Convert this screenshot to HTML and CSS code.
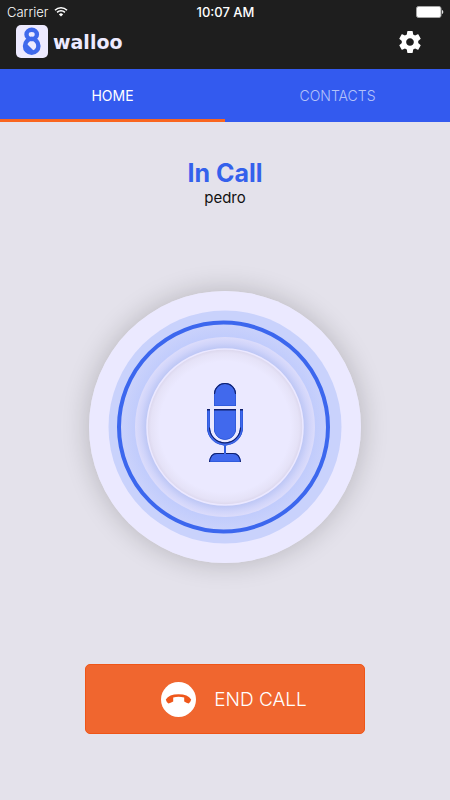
FILE: index.html
```html
<!DOCTYPE html>
<html lang="en">
<head>
<meta charset="utf-8">
<meta name="viewport" content="width=device-width, initial-scale=1">
<title>walloo</title>
<link rel="stylesheet" href="styles.css">
</head>
<body>
<header class="top">
  <div class="status">
    <div class="carrier">
      <span>Carrier</span>
      <svg class="wifi" viewBox="0 0 14 11" width="14" height="11" aria-hidden="true">
        <path d="M1 4.2a8.6 8.6 0 0 1 12 0M3.1 6.4a5.6 5.6 0 0 1 7.8 0" fill="none" stroke="#fff" stroke-width="1.6"/>
        <path d="M7 10.6 4.9 8.4a3 3 0 0 1 4.2 0z" fill="#fff"/>
      </svg>
    </div>
    <time class="clock">10:07 AM</time>
    <svg class="battery" viewBox="0 0 28 12" width="28" height="12" aria-hidden="true">
      <rect x=".5" y=".5" width="24.5" height="11" rx="2" fill="#fff" stroke="#a5a5a5"/>
      <path d="M26 4c1.7.4 1.7 3.6 0 4z" fill="#ddd"/>
    </svg>
  </div>
  <div class="bar">
    <div class="brand">
      <svg viewBox="0 0 32 33" width="32" height="33" aria-hidden="true">
        <rect width="32" height="33" rx="5" fill="#edeaff"/>
        <g fill="none" stroke="#3f69ec" stroke-width="4.4">
          <ellipse cx="15.700" cy="9.400" rx="5.200" ry="4.600"/>
          <ellipse cx="15.700" cy="20.900" rx="6.700" ry="7"/>
        </g>
        <path d="M11 26V19L18 26z" fill="#3f69ec"/>
      </svg>
      <span class="wordmark">walloo</span>
    </div>
    <button class="settings" type="button" aria-label="Settings">
      <svg viewBox="2 2 20 20" width="22" height="22" aria-hidden="true">
        <path fill="#fff" d="M19.43 12.98c.04-.32.07-.64.07-.98s-.03-.66-.07-.98l2.11-1.65c.19-.15.24-.42.12-.64l-2-3.46c-.12-.22-.39-.3-.61-.22l-2.49 1c-.52-.4-1.08-.73-1.69-.98l-.38-2.65C14.46 2.18 14.25 2 14 2h-4c-.25 0-.46.18-.49.42l-.38 2.65c-.61.25-1.17.59-1.69.98l-2.49-1c-.23-.09-.49 0-.61.22l-2 3.46c-.13.22-.07.49.12.64l2.11 1.65c-.04.32-.07.65-.07.98s.03.66.07.98l-2.11 1.65c-.19.15-.24.42-.12.64l2 3.46c.12.22.39.3.61.22l2.49-1c.52.4 1.08.73 1.69.98l.38 2.65c.03.24.24.42.49.42h4c.25 0 .46-.18.49-.42l.38-2.65c.61-.25 1.17-.59 1.69-.98l2.49 1c.23.09.49 0 .61-.22l2-3.46c.12-.22.07-.49-.12-.64l-2.11-1.65zM12 15.5c-1.93 0-3.5-1.57-3.5-3.5s1.57-3.5 3.5-3.5 3.5 1.57 3.5 3.5-1.57 3.5-3.5 3.5z"/>
      </svg>
    </button>
  </div>
</header>
<nav class="tabs">
  <a class="tab tab-active" href="#home" aria-current="page">HOME</a>
  <a class="tab" href="#contacts">CONTACTS</a>
</nav>
<main class="call">
  <h1 class="title">In Call</h1>
  <p class="name">pedro</p>
  <button class="dial" type="button" aria-label="Microphone">
    <svg viewBox="0 0 272 272" width="272" height="272" aria-hidden="true">
      <defs>
        <radialGradient id="band" gradientUnits="userSpaceOnUse" cx="136" cy="136" r="106">
          <stop offset=".85" stop-color="#c1ccfc"/>
          <stop offset="1" stop-color="#ccd3fb"/>
        </radialGradient>
        <radialGradient id="halo" gradientUnits="userSpaceOnUse" cx="136" cy="136" r="90">
          <stop offset=".87" stop-color="#bcc6f5"/>
          <stop offset=".94" stop-color="#d0d4fa"/>
          <stop offset="1" stop-color="#dcdcfb"/>
        </radialGradient>
        <radialGradient id="disc" gradientUnits="userSpaceOnUse" cx="136" cy="136" r="78">
          <stop offset=".84" stop-color="#ebe9ff"/>
          <stop offset=".95" stop-color="#e5e2f7"/>
          <stop offset="1" stop-color="#dbd6ec"/>
        </radialGradient>
        <path id="shape" d="M125 115v-12a11 11 0 0 1 22 0v12zM125 118h22v19.700a11 11 0 0 1-22 0zM118 118h3v18.500a15 15 0 0 0 30 0v-18.500h3v18.500a18 18 0 0 1-17 17.900v7.600h7q7 0 8 9h-32q1-9 8-9h7v-7.600a18 18 0 0 1-17-17.900z"/>
        <clipPath id="mic">
          <use href="#shape"/>
        </clipPath>
      </defs>
      <circle cx="136" cy="136" r="136" fill="#ebe9ff"/>
      <circle cx="136" cy="136" r="116.500" fill="#c9d2fc"/>
      <circle cx="134.500" cy="136" r="104.500" fill="url(#band)" stroke="#3c67ee" stroke-width="4"/>
      <circle cx="136" cy="136" r="90" fill="url(#halo)"/>
      <circle cx="136" cy="136" r="78" fill="url(#disc)" stroke="#ebe8ff" stroke-width="1.600"/>
      <use href="#shape" fill="#4169ed"/>
      <g clip-path="url(#mic)" fill="none">
        <use href="#shape" stroke="#2350cc" stroke-width="1"/>
        <path d="M125 103a11 11 0 0 1 22 0M125 118.500h22M118 118.500h3M151 118.500h3M121 136.500a15 15 0 0 0 30 0M120 171q1-9 8-9h7M137 162h7q7 0 8 9" stroke="#10206b" stroke-width="2"/>
      </g>
    </svg>
  </button>
  <button class="end" type="button">
    <svg viewBox="0 0 35 35" width="35" height="35" aria-hidden="true">
      <circle cx="17.500" cy="17.500" r="17.500" fill="#fff"/>
      <path fill="#ef571b" d="M4.800 17.600Q8 12.300 17.500 12.300T30.200 17.600Q29.800 19.800 27.600 21.600Q25.500 20.600 23.200 19.400V15.400Q17.500 13.900 12.200 15.400V19.400Q9.500 20.600 7.400 21.600Q5.200 19.800 4.800 17.600z"/>
    </svg>
    <span>END CALL</span>
  </button>
</main>
</body>
</html>
```

FILE: styles.css
```css
* {
  box-sizing: border-box;
}

body {
  margin: 0;
  min-height: 100vh;
  display: flex;
  flex-direction: column;
  background: #e4e2eb;
  font-family: Inter, "Liberation Sans", sans-serif;
}

button {
  padding: 0;
  border: 0;
  background: none;
  font: inherit;
  cursor: pointer;
}

svg {
  display: block;
  flex: none;
}

.top {
  background: #1e1e1e;
  color: #fff;
}

.status {
  display: grid;
  grid-template-columns: 1fr auto 1fr;
  align-items: center;
  height: 23px;
  padding: 0 6px 0 7px;
  font-size: 13px;
}

.carrier {
  display: flex;
  align-items: center;
  gap: 6px;
  font-weight: 300;
}

.clock {
  font-weight: 500;
}

.battery {
  justify-self: end;
}

.bar {
  display: flex;
  align-items: flex-start;
  justify-content: space-between;
  height: 46px;
  padding: 2px 29px 0 16px;
}

.brand {
  display: flex;
  align-items: center;
  gap: 5px;
}

.wordmark {
  color: #edeaff;
  font: bold 19px/20px "DejaVu Sans", sans-serif;
}

.settings {
  margin-top: 6px;
}

.tabs {
  display: flex;
  height: 53px;
  background: #335aef;
}

.tab {
  flex: 1;
  display: flex;
  align-items: center;
  justify-content: center;
  padding-top: 3px;
  border-bottom: 3px solid transparent;
  color: #b3c2fa;
  font-size: 14px;
  font-weight: 300;
  text-decoration: none;
}

.tab-active {
  border-bottom-color: #f9651f;
  color: #fff;
  font-weight: 400;
}

.call {
  flex: 1;
  display: flex;
  flex-direction: column;
  align-items: center;
  padding: 35px 24px 66px;
}

.title {
  margin: 0;
  color: #3461ec;
  font-size: 25px;
  font-weight: 700;
  line-height: 32px;
}

.name {
  margin: 0;
  color: #111;
  font-size: 15px;
  line-height: 18px;
}

.dial {
  margin: 84px 0 auto;
  border-radius: 50%;
  box-shadow: 0 0 26px 2px #0000002e;
}

.end {
  display: flex;
  align-items: center;
  justify-content: center;
  gap: 18px;
  width: 100%;
  max-width: 280px;
  height: 70px;
  padding-left: 18px;
  border: 1px solid #ef5517;
  border-radius: 5px;
  background: #f0662f;
  color: #fff;
  font-size: 19px;
  font-weight: 300;
}
```
